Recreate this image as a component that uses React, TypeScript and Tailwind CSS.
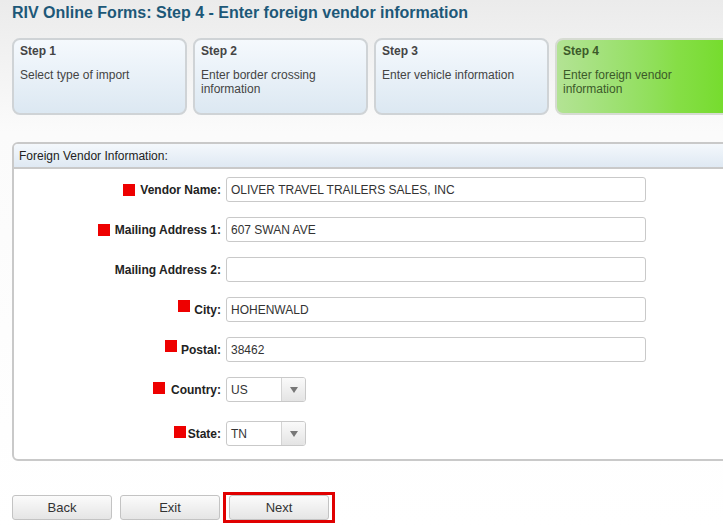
import { ReactNode } from 'react';

const steps = [
  { title: 'Step 1', text: 'Select type of import' },
  { title: 'Step 2', text: 'Enter border crossing information' },
  { title: 'Step 3', text: 'Enter vehicle information' },
  { title: 'Step 4', text: 'Enter foreign vendor information', active: true },
];

function Req({ className = '' }: { className?: string }) {
  return <span className={`inline-block w-3 h-3 bg-[#ee0000] ${className}`} />;
}

function Row({ label, children, req }: { label: string; children: ReactNode; req?: ReactNode }) {
  return (
    <div className="flex items-center h-[25px]">
      <div className="w-[212px] flex items-center justify-end pr-[5px] text-[12px] font-bold text-[#222]">
        {req}
        <span>{label}</span>
      </div>
      {children}
    </div>
  );
}

function TextBox({ value }: { value: string }) {
  return (
    <div className="w-[420px] h-[25px] border border-[#c9c9c9] rounded-[3px] bg-white px-[4px] flex items-center text-[12px] text-[#333]">
      {value}
    </div>
  );
}

function SelectBox({ value }: { value: string }) {
  return (
    <div className="w-[80px] h-[25px] border border-[#c9c9c9] rounded-[3px] bg-white flex text-[12px] text-[#333] overflow-hidden">
      <div className="flex-1 flex items-center px-[4px]">{value}</div>
      <div className="w-[24px] border-l border-[#d4d4d4] bg-gradient-to-b from-[#fafafa] to-[#e4e4e4] flex items-center justify-center">
        <svg width="8" height="6" viewBox="0 0 8 6">
          <path d="M0 0 L8 0 L4 6 Z" fill="#777" />
        </svg>
      </div>
    </div>
  );
}

function Btn({ label }: { label: string }) {
  return (
    <button className="w-[100px] h-[25px] border border-[#c3c3c3] rounded-[3px] bg-gradient-to-b from-[#fbfbfb] to-[#e5e5e5] text-[13px] text-[#333]">
      {label}
    </button>
  );
}

export default function App() {
  return (
    <div
      className="w-[723px] h-[529px] overflow-hidden bg-gradient-to-b from-[#ebebeb] via-[#fbfbfb] via-25% to-white text-[#333]"
      style={{ fontFamily: '"Liberation Sans", Arial, sans-serif' }}
    >
      <div className="pl-3 pt-[3px]">
        <h1 className="text-[16px] leading-[19px] font-bold text-[#1d5878]">
          RIV Online Forms: Step 4 - Enter foreign vendor information
        </h1>

        <div className="flex gap-[6px] mt-[16px]">
          {steps.map((s) => (
            <div
              key={s.title}
              className={`w-[175px] h-[77px] shrink-0 rounded-[8px] border-2 px-[6px] pt-[4px] ${
                s.active
                  ? 'border-[#d6dbd2] bg-gradient-to-r from-[#b3e394] via-[#86de46] via-70% to-[#74dc2a] text-[#3c5a2a]'
                  : 'border-[#cfd3d6] bg-gradient-to-b from-[#f5f9fd] to-[#dce8f2] text-[#444]'
              }`}
            >
              <div className="text-[12px] font-bold leading-[14px]">{s.title}</div>
              <div className="text-[12px] leading-[14px] mt-[10px] pr-2">{s.text}</div>
            </div>
          ))}
        </div>

        <div className="mt-[27px] w-[730px] h-[319px] border-2 border-[#c9c9c9] rounded-[6px] bg-white overflow-hidden">
          <div className="h-[25px] border-b-2 border-[#c9c9c9] bg-gradient-to-b from-[#f4f8fc] to-[#dfe9f3] flex items-center px-[5px] text-[12px] text-[#222]">
            Foreign Vendor Information:
          </div>
          <div className="pt-[8px] flex flex-col gap-[15px]">
            <Row label="Vendor Name:" req={<Req className="mr-[5px]" />}>
              <TextBox value="OLIVER TRAVEL TRAILERS SALES, INC" />
            </Row>
            <Row label="Mailing Address 1:" req={<Req className="mr-[5px]" />}>
              <TextBox value="607 SWAN AVE" />
            </Row>
            <Row label="Mailing Address 2:">
              <TextBox value="" />
            </Row>
            <Row label="City:" req={<Req className="mr-[4px] -translate-y-[4px]" />}>
              <TextBox value="HOHENWALD" />
            </Row>
            <Row label="Postal:" req={<Req className="mr-[4px] -translate-y-[4px]" />}>
              <TextBox value="38462" />
            </Row>
            <Row label="Country:" req={<Req className="mr-[6px] -translate-y-[2px]" />}>
              <SelectBox value="US" />
            </Row>
            <div className="mt-[4px]">
              <Row label="State:" req={<Req className="mr-[2px] -translate-y-[2px]" />}>
                <SelectBox value="TN" />
              </Row>
            </div>
          </div>
        </div>

        <div className="flex items-center mt-[31px]">
          <Btn label="Back" />
          <div className="ml-[8px]">
            <Btn label="Exit" />
          </div>
          <div className="ml-[3px] border-[3px] border-[#e00000] px-[3px] py-0">
            <Btn label="Next" />
          </div>
        </div>
      </div>
    </div>
  );
}
